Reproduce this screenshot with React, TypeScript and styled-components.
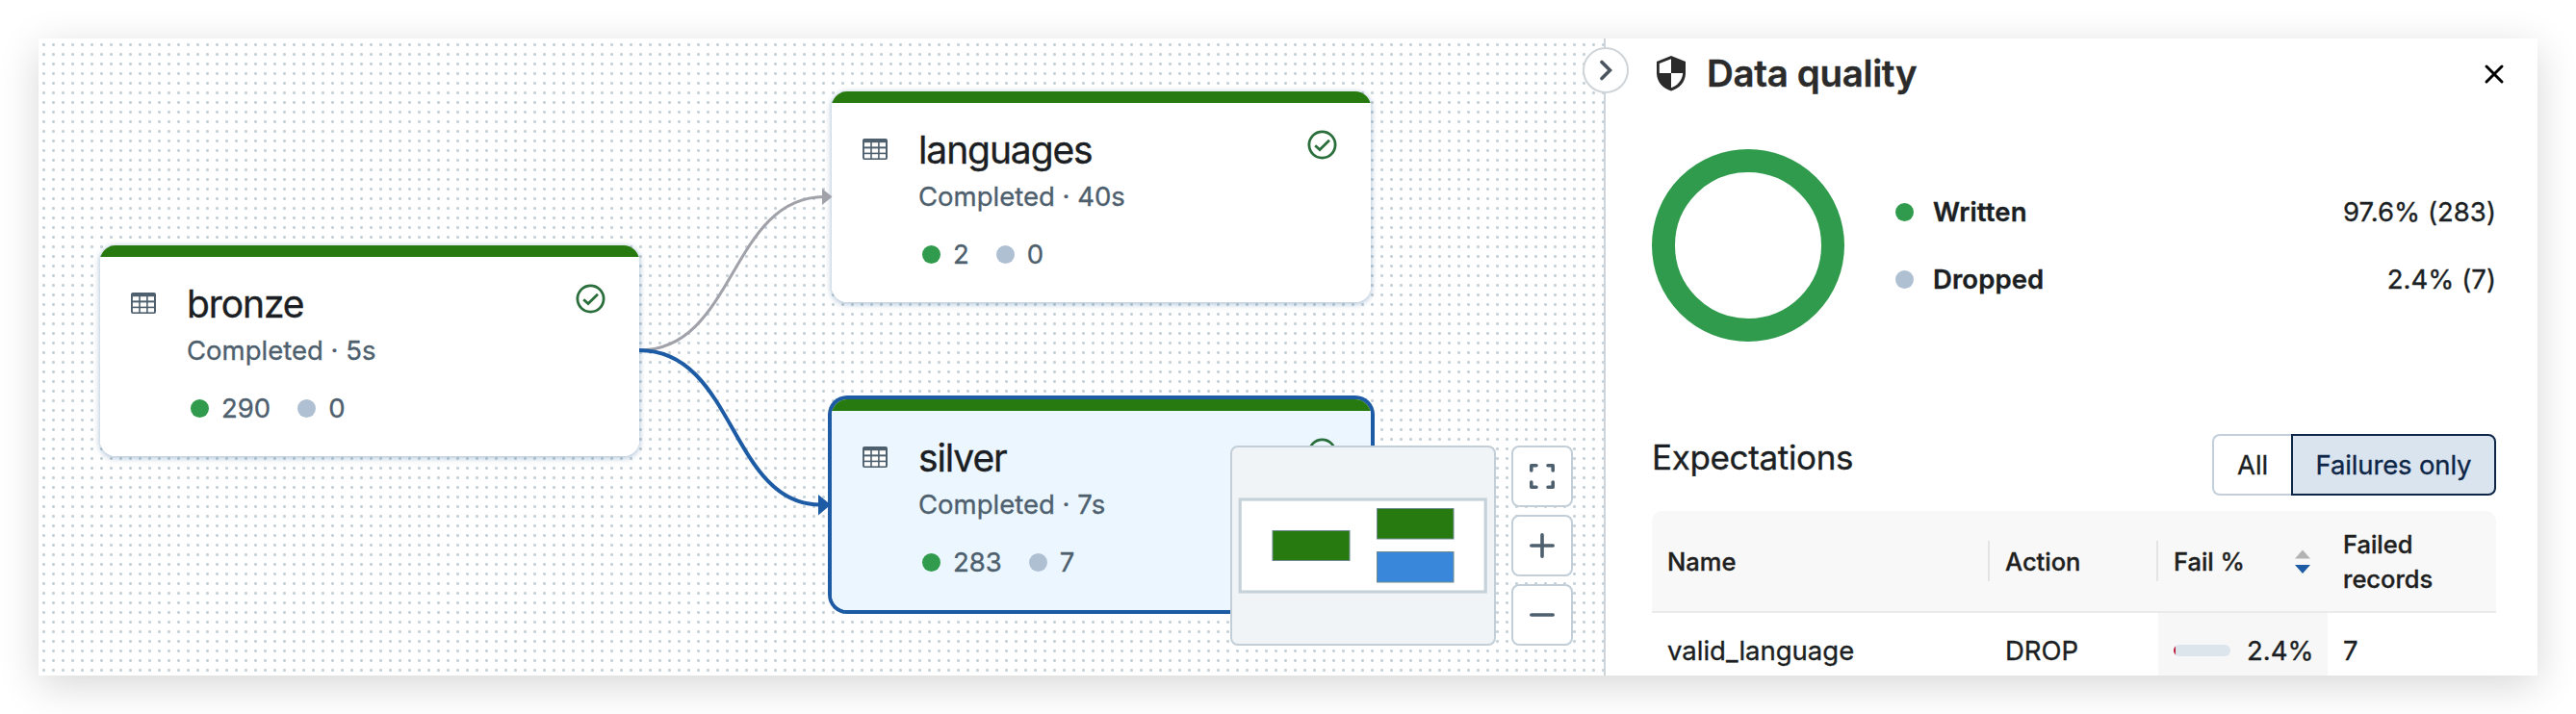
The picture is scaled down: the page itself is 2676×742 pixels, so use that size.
import React from "react";
import styled, { createGlobalStyle } from "styled-components";

const GlobalStyle = createGlobalStyle`
  * { box-sizing: border-box; }
  html, body { margin: 0; background: #fff; }
  body {
    overflow: hidden;
    font-family: Inter, sans-serif;
    font-size: 27px;
    color: #1b1f23;
    -webkit-text-stroke: 0.35px currentColor;
  }
`;

const Page = styled.div`
  width: 2676px;
  height: 742px;
  padding: 40px;
  background: #fff;
`;

const Window = styled.div`
  display: flex;
  width: 2596px;
  height: 662px;
  background: #fff;
  box-shadow: 0 10px 40px rgba(0, 0, 0, 0.16);
`;

const Canvas = styled.div`
  position: relative;
  flex: none;
  width: 1626px;
  height: 662px;
  background-color: #fff;
  background-image: radial-gradient(circle at 5.5px 6.5px, #c5d1d8 1.1px, rgba(197, 209, 216, 0) 2px);
  background-size: 10px 10px;
`;

const Edges = styled.svg`
  position: absolute;
  inset: 0;
`;

const NodeCard = styled.div<{ $x: number; $y: number; $selected?: boolean }>`
  position: absolute;
  left: ${(p) => p.$x}px;
  top: ${(p) => p.$y}px;
  width: 560px;
  height: 219px;
  display: flex;
  align-items: flex-start;
  padding: 12px 35px 0 32px;
  border-radius: 16px;
  overflow: hidden;
  background: linear-gradient(#277a10 12px, ${(p) => (p.$selected ? "#ebf6ff" : "#fff")} 12px);
  box-shadow: ${(p) =>
    p.$selected
      ? "0 0 0 4px #1d5ba4"
      : "0 1px 5px 1px rgba(60, 110, 160, 0.3), 0 3px 8px rgba(60, 110, 160, 0.12)"};
`;

const TableGlyph = styled.svg`
  flex: none;
  margin-top: 37px;
`;

const CheckGlyph = styled.svg`
  flex: none;
  margin: 28px 0 0 auto;
`;

const NodeBody = styled.div`
  margin: 23px 0 0 32px;
`;

const NodeName = styled.div`
  font-size: 39px;
  line-height: 52px;
  letter-spacing: -1.1px;
  color: #1b1e22;
`;

const NodeStatus = styled.div`
  margin-top: 4px;
  font-size: 27.5px;
  line-height: 36px;
  color: #4e5f6e;
`;

const NodeCounts = styled.div`
  display: flex;
  align-items: center;
  gap: 13px;
  margin: 24px 0 0 4px;
  font-size: 27.5px;
  line-height: 36px;
  color: #4e5f6e;
`;

const Dot = styled.span<{ $tone: "written" | "dropped" }>`
  flex: none;
  width: 19px;
  height: 19px;
  border-radius: 50%;
  background: ${(p) => (p.$tone === "written" ? "#309b4c" : "#b0c0d3")};
`;

const Count = styled.span`
  margin-right: 15px;
`;

const CanvasTools = styled.div`
  position: absolute;
  right: 32px;
  bottom: 31px;
  display: flex;
  gap: 16px;
`;

const MiniMap = styled.div`
  width: 276px;
  height: 208px;
  border: 2px solid #c3cfd8;
  border-radius: 8px;
  background: #f1f4f7;
  overflow: hidden;
`;

const ToolButtons = styled.div`
  display: flex;
  flex-direction: column;
  gap: 8px;
`;

const ToolButton = styled.button`
  display: flex;
  align-items: center;
  justify-content: center;
  width: 64px;
  height: 64px;
  padding: 0;
  border: 2px solid #c3cfd8;
  border-radius: 8px;
  background: #fff;
`;

const SidePanel = styled.aside`
  position: relative;
  flex: 1;
  height: 662px;
  border-left: 2px solid #cdd5db;
`;

const PanelContent = styled.div`
  height: 662px;
  padding: 0 43px 0 48px;
  overflow: hidden;
`;

const CollapseButton = styled.button`
  position: absolute;
  left: -24px;
  top: 9px;
  display: flex;
  align-items: center;
  justify-content: center;
  width: 48px;
  height: 48px;
  padding: 0;
  border: 2px solid #cfd4d8;
  border-radius: 50%;
  background: #fff;
`;

const PanelHeader = styled.header`
  display: flex;
  align-items: center;
  height: 74px;
  margin-right: -9px;
  padding-left: 3px;
`;

const PanelTitle = styled.h1`
  flex: 1;
  margin: 0 0 2px 20px;
  font-size: 38.5px;
  line-height: 48px;
  font-weight: 600;
  letter-spacing: -0.35px;
  color: #2b2b2b;
`;

const Summary = styled.section`
  display: flex;
  align-items: center;
  height: 200px;
  margin-top: 41px;
`;

const Legend = styled.div`
  flex: 1;
  display: flex;
  flex-direction: column;
  gap: 34px;
  margin-left: 53px;
`;

const LegendRow = styled.div`
  display: flex;
  align-items: center;
  height: 36px;
  font-size: 27.5px;
`;

const LegendLabel = styled.span`
  flex: 1;
  margin-left: 20px;
  font-weight: 600;
  letter-spacing: 0.1px;
`;

const LegendValue = styled.span`
  letter-spacing: 0.05px;
`;

const SectionHeader = styled.div`
  display: flex;
  align-items: center;
  justify-content: space-between;
  height: 64px;
  margin-top: 96px;
`;

const SectionTitle = styled.h2`
  margin: 0 0 17px;
  font-size: 35px;
  line-height: 44px;
  font-weight: 400;
  letter-spacing: -0.35px;
`;

const Segmented = styled.div`
  display: flex;
  height: 64px;
`;

const Segment = styled.button<{ $active?: boolean }>`
  width: ${(p) => (p.$active ? 213 : 82)}px;
  padding: 0;
  border: 2px solid ${(p) => (p.$active ? "#0e2647" : "#c3d0dc")};
  border-right-width: ${(p) => (p.$active ? 2 : 0)}px;
  border-radius: ${(p) => (p.$active ? "0 8px 8px 0" : "8px 0 0 8px")};
  background: ${(p) => (p.$active ? "#d9e4ef" : "#fff")};
  color: ${(p) => (p.$active ? "#0e2647" : "#1b1f23")};
  font: 400 27.5px Inter, sans-serif;
  letter-spacing: -0.15px;
`;

const Table = styled.div`
  margin-top: 16px;
`;

const HeadRow = styled.div`
  display: grid;
  grid-template-columns: 351px 175px 176px 1fr;
  align-items: center;
  height: 106px;
  border-bottom: 2px solid #ebebeb;
  border-radius: 10px 10px 0 0;
  background: #f8f8f8;
`;

const HeadCell = styled.div<{ $divider?: boolean }>`
  display: flex;
  align-items: center;
  justify-content: space-between;
  min-height: 42px;
  padding: 1px 16px 0;
  border-right: 2px solid ${(p) => (p.$divider ? "#e4e4e4" : "transparent")};
  font-size: 25.5px;
  line-height: 36px;
  font-weight: 500;
  letter-spacing: 0;
  color: #1f1f1f;
`;

const BodyRow = styled.div`
  display: grid;
  grid-template-columns: 351px 175px 176px 1fr;
  height: 77px;
`;

const Cell = styled.div<{ $shaded?: boolean }>`
  display: flex;
  align-items: center;
  gap: 17px;
  padding: 0 16px;
  font-size: 27.5px;
  background: ${(p) => (p.$shaded ? "#f7f7f7" : "transparent")};
`;

const Meter = styled.div`
  flex: none;
  width: 59px;
  height: 12px;
  border-radius: 6px;
  overflow: hidden;
  background: #dce4ec;
`;

const MeterFill = styled.div`
  min-width: 2px;
  height: 12px;
  background: #c0143c;
`;

const TableIcon = () => (
  <TableGlyph width="26" height="22" viewBox="0 0 26 22">
    <rect width="26" height="22" rx="2" fill="#4e5f6e" />
    <g fill="#fff">
      {[4.2, 10.4, 16.2].map((y) =>
        [1.9, 9.8, 17.7].map((x) => <rect key={`${x}-${y}`} x={x} y={y} width="6.3" height="4.2" />)
      )}
    </g>
  </TableGlyph>
);

const CheckIcon = () => (
  <CheckGlyph width="31" height="31" viewBox="0 0 31 31" fill="none" stroke="#2a6e3c" strokeWidth="2.8">
    <circle cx="15.5" cy="15.5" r="13.6" />
    <path d="M8.2 16.200L13 20.500L23 10.800" />
  </CheckGlyph>
);

interface PipelineNodeProps {
  x: number;
  y: number;
  name: string;
  duration: string;
  written: number;
  dropped: number;
  selected?: boolean;
}

const PipelineNode = ({ x, y, name, duration, written, dropped, selected }: PipelineNodeProps) => (
  <NodeCard $x={x} $y={y} $selected={selected}>
    <TableIcon />
    <NodeBody>
      <NodeName>{name}</NodeName>
      <NodeStatus>Completed · {duration}</NodeStatus>
      <NodeCounts>
        <Dot $tone="written" />
        <Count>{written}</Count>
        <Dot $tone="dropped" />
        <Count>{dropped}</Count>
      </NodeCounts>
    </NodeBody>
    <CheckIcon />
  </NodeCard>
);

export default function App() {
  return (
    <Page>
      <GlobalStyle />
      <Window>
        <Canvas>
          <PipelineNode x={64} y={215} name="bronze" duration="5s" written={290} dropped={0} />
          <PipelineNode x={824} y={55} name="languages" duration="40s" written={2} dropped={0} />
          <Edges width="1626" height="662" fill="none">
            <path d="M624 324C724 324 718 165 816 164.500" stroke="#a0a1a9" strokeWidth="3" />
            <path d="M814 156L824.500 164.500L814 173Z" fill="#a0a1a9" />
            <path d="M624 324C724 324 718 484 812 484.500" stroke="#1d5ba4" strokeWidth="4" />
            <path d="M810 474L823 484.500L810 495.500Z" fill="#1d5ba4" />
          </Edges>
          <PipelineNode x={824} y={375} name="silver" duration="7s" written={283} dropped={7} selected />
          <CanvasTools>
            <MiniMap>
              <svg width="272" height="204">
                <rect x="8.200" y="54" width="255" height="96" fill="#fff" stroke="#c6d2da" strokeWidth="3.200" />
                <g stroke="#6f8a90" strokeWidth="1">
                  <rect x="42" y="86.500" width="80" height="31" fill="#277a10" />
                  <rect x="150.500" y="63.500" width="79.500" height="31.500" fill="#277a10" />
                  <rect x="150.500" y="108.500" width="79.500" height="31.500" fill="#3887da" />
                </g>
              </svg>
            </MiniMap>
            <ToolButtons>
              <ToolButton aria-label="Fit view">
                <svg width="26" height="26" fill="none" stroke="#4e5f6e" strokeWidth="3.600" strokeLinecap="round" strokeLinejoin="round">
                  <path d="M1.800 7V1.800H7M19 1.800H24.200V7M24.200 19V24.200H19M7 24.200H1.800V19" />
                </svg>
              </ToolButton>
              <ToolButton aria-label="Zoom in">
                <svg width="26" height="26" stroke="#4e5f6e" strokeWidth="3.600" strokeLinecap="round">
                  <path d="M13 1.800V24.200M1.800 13H24.200" />
                </svg>
              </ToolButton>
              <ToolButton aria-label="Zoom out">
                <svg width="26" height="26" stroke="#4e5f6e" strokeWidth="3.600" strokeLinecap="round">
                  <path d="M1.800 13H24.200" />
                </svg>
              </ToolButton>
            </ToolButtons>
          </CanvasTools>
        </Canvas>
        <SidePanel>
          <CollapseButton aria-label="Collapse panel">
            <svg width="14" height="22" fill="none" stroke="#4a5560" strokeWidth="3.600" strokeLinecap="round">
              <path d="M3 2.500L11.500 11L3 19.500" />
            </svg>
          </CollapseButton>
          <PanelContent>
            <PanelHeader>
              <svg width="34" height="42" viewBox="0 0 34 42">
                <path d="M17 2L32 8V20C32 29 25.500 36 17 38.500C8.500 36 2 29 2 20V8Z" fill="#2b2b2b" />
                <path d="M17 5.300V20H4.800V9.900Z" fill="#fff" />
                <path d="M17 20H29.200C28.500 27.500 23.500 33 17 35.300Z" fill="#fff" />
              </svg>
              <PanelTitle>Data quality</PanelTitle>
              <svg width="22" height="22" stroke="#000" strokeWidth="3" strokeLinecap="round">
                <path d="M3 3L19 19M19 3L3 19" />
              </svg>
            </PanelHeader>
            <Summary>
              <svg width="200" height="200">
                <circle cx="100" cy="100" r="88" fill="none" stroke="#309b4c" strokeWidth="24" />
              </svg>
              <Legend>
                <LegendRow>
                  <Dot $tone="written" />
                  <LegendLabel>Written</LegendLabel>
                  <LegendValue>97.6% (283)</LegendValue>
                </LegendRow>
                <LegendRow>
                  <Dot $tone="dropped" />
                  <LegendLabel>Dropped</LegendLabel>
                  <LegendValue>2.4% (7)</LegendValue>
                </LegendRow>
              </Legend>
            </Summary>
            <SectionHeader>
              <SectionTitle>Expectations</SectionTitle>
              <Segmented>
                <Segment>All</Segment>
                <Segment $active>Failures only</Segment>
              </Segmented>
            </SectionHeader>
            <Table>
              <HeadRow>
                <HeadCell $divider>Name</HeadCell>
                <HeadCell $divider>Action</HeadCell>
                <HeadCell>
                  Fail %
                  <svg width="16" height="26">
                    <path d="M0 9.500L8 0.500L16 9.500Z" fill="#b3b3b3" />
                    <path d="M0 16L8 25L16 16Z" fill="#1d5ba4" />
                  </svg>
                </HeadCell>
                <HeadCell>Failed records</HeadCell>
              </HeadRow>
              <BodyRow>
                <Cell>valid_language</Cell>
                <Cell>DROP</Cell>
                <Cell $shaded>
                  <Meter>
                    <MeterFill style={{ width: "2.4%" }} />
                  </Meter>
                  2.4%
                </Cell>
                <Cell>7</Cell>
              </BodyRow>
            </Table>
          </PanelContent>
        </SidePanel>
      </Window>
    </Page>
  );
}
